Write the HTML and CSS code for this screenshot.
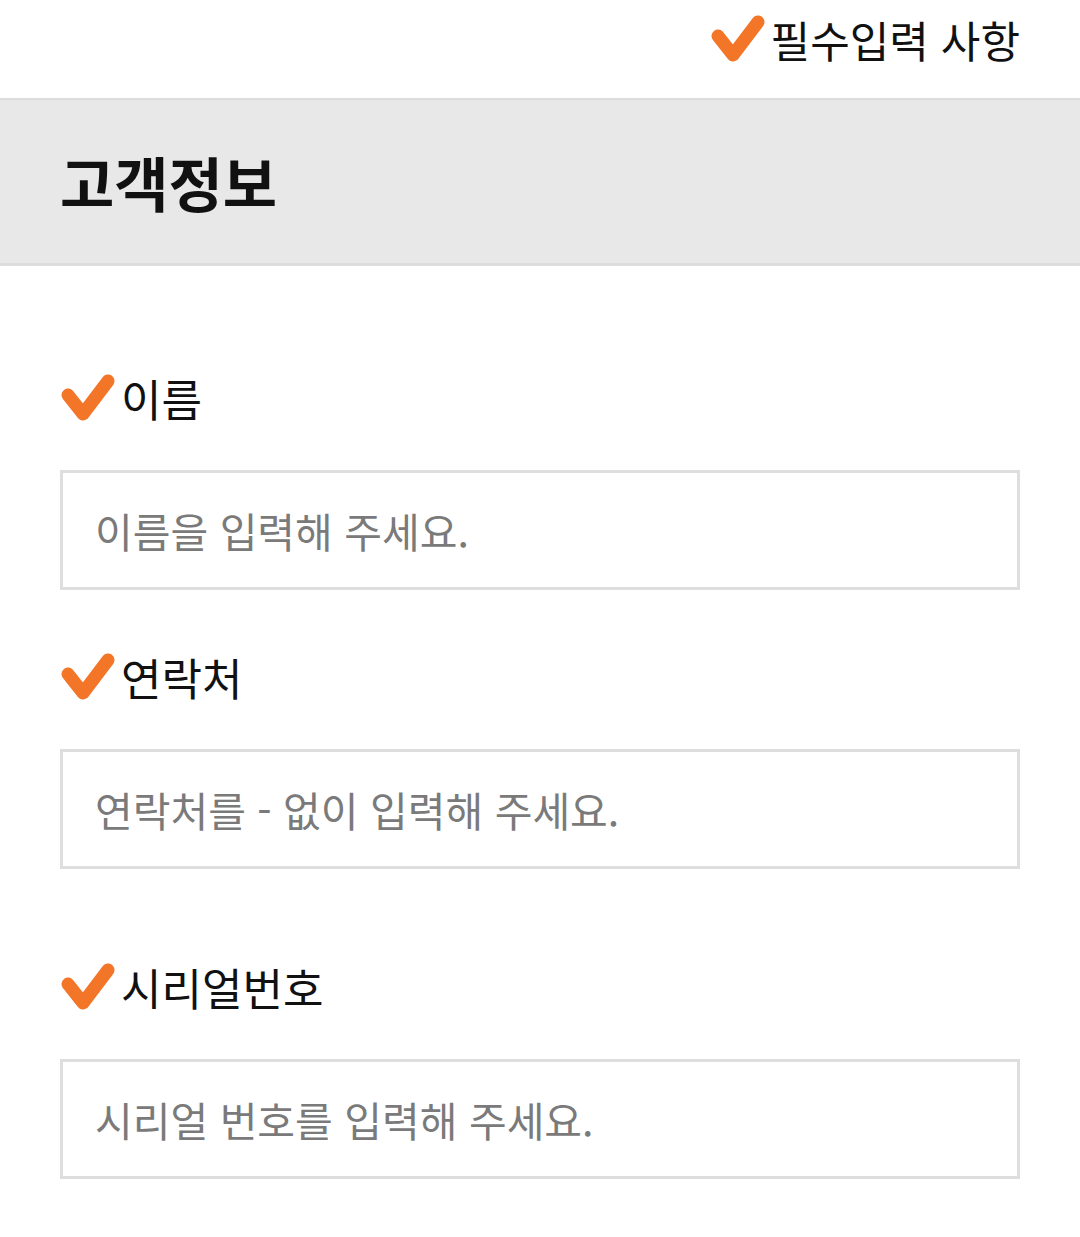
FILE: index.html
```html
<!DOCTYPE html>
<html lang="ko">
<head>
<meta charset="utf-8">
<title>고객정보</title>
<link rel="stylesheet" href="styles.css">
</head>
<body>
<header class="top">
  <div class="req">
    <svg class="check" viewBox="0 0 56 48" width="56" height="48" aria-hidden="true"><path d="M8 21 L23 40 L48 7" /></svg>
    <span class="req-text">필수입력 사항</span>
  </div>
</header>
<section class="band">
  <h1 class="title">고객정보</h1>
</section>
<form class="form">
  <div class="field f1">
    <label class="label" for="name">
      <svg class="check" viewBox="0 0 56 48" width="56" height="48" aria-hidden="true"><path d="M8 21 L23 40 L48 7" /></svg>
      <span>이름</span>
    </label>
    <input class="input" id="name" type="text" placeholder="이름을 입력해 주세요.">
  </div>
  <div class="field f2">
    <label class="label" for="phone">
      <svg class="check" viewBox="0 0 56 48" width="56" height="48" aria-hidden="true"><path d="M8 21 L23 40 L48 7" /></svg>
      <span>연락처</span>
    </label>
    <input class="input" id="phone" type="text" placeholder="연락처를 - 없이 입력해 주세요.">
  </div>
  <div class="field f3">
    <label class="label" for="serial">
      <svg class="check" viewBox="0 0 56 48" width="56" height="48" aria-hidden="true"><path d="M8 21 L23 40 L48 7" /></svg>
      <span>시리얼번호</span>
    </label>
    <input class="input" id="serial" type="text" placeholder="시리얼 번호를 입력해 주세요.">
  </div>
</form>
</body>
</html>
```
FILE: styles.css
```css
* { box-sizing: border-box; }
html, body {
  margin: 0;
  padding: 0;
  background: #ffffff;
  font-family: "Noto Sans CJK KR", "Noto Sans", sans-serif;
  color: #111;
}
.top {
  height: 98px;
  display: flex;
  justify-content: flex-end;
  align-items: flex-start;
  padding-right: 60px;
}
.req {
  display: flex;
  align-items: center;
  margin-top: 15px;
  height: 48px;
}
.req-text {
  font-size: 43px;
  line-height: 48px;
  margin-left: 5px;
  color: #111;
}
.check {
  display: block;
  flex: none;
  filter: blur(0.5px);
}
.check path {
  fill: none;
  stroke: #f37527;
  stroke-width: 13;
  stroke-linecap: round;
  stroke-linejoin: round;
}
.band {
  background: #e8e8e8;
  border-top: 2px solid #dcdcdc;
  border-bottom: 3px solid #dcdcdc;
  height: 168px;
  display: flex;
  align-items: center;
  padding-left: 60px;
}
.title {
  margin: 0;
  font-size: 59px;
  font-weight: 700;
  line-height: 1;
  color: #111;
}
.form {
  padding: 0 60px;
  display: flex;
  flex-direction: column;
}
.field {
  display: flex;
  flex-direction: column;
}
.f1 { margin-top: 108px; }
.f2 { margin-top: 63px; }
.f3 { margin-top: 94px; }
.label {
  display: flex;
  align-items: center;
  height: 48px;
  font-size: 44px;
  line-height: 48px;
  color: #111;
}
.label span { margin-left: 5px; }
.input {
  margin-top: 48px;
  width: 960px;
  height: 120px;
  border: 3px solid #dedede;
  border-radius: 0;
  background: #fff;
  padding: 0 0 0 32px;
  font-family: "Noto Sans CJK KR", "Noto Sans", sans-serif;
  font-size: 41px;
  color: #333;
  outline: none;
}
.input::placeholder {
  color: #7a7a7a;
  opacity: 1;
}
```
